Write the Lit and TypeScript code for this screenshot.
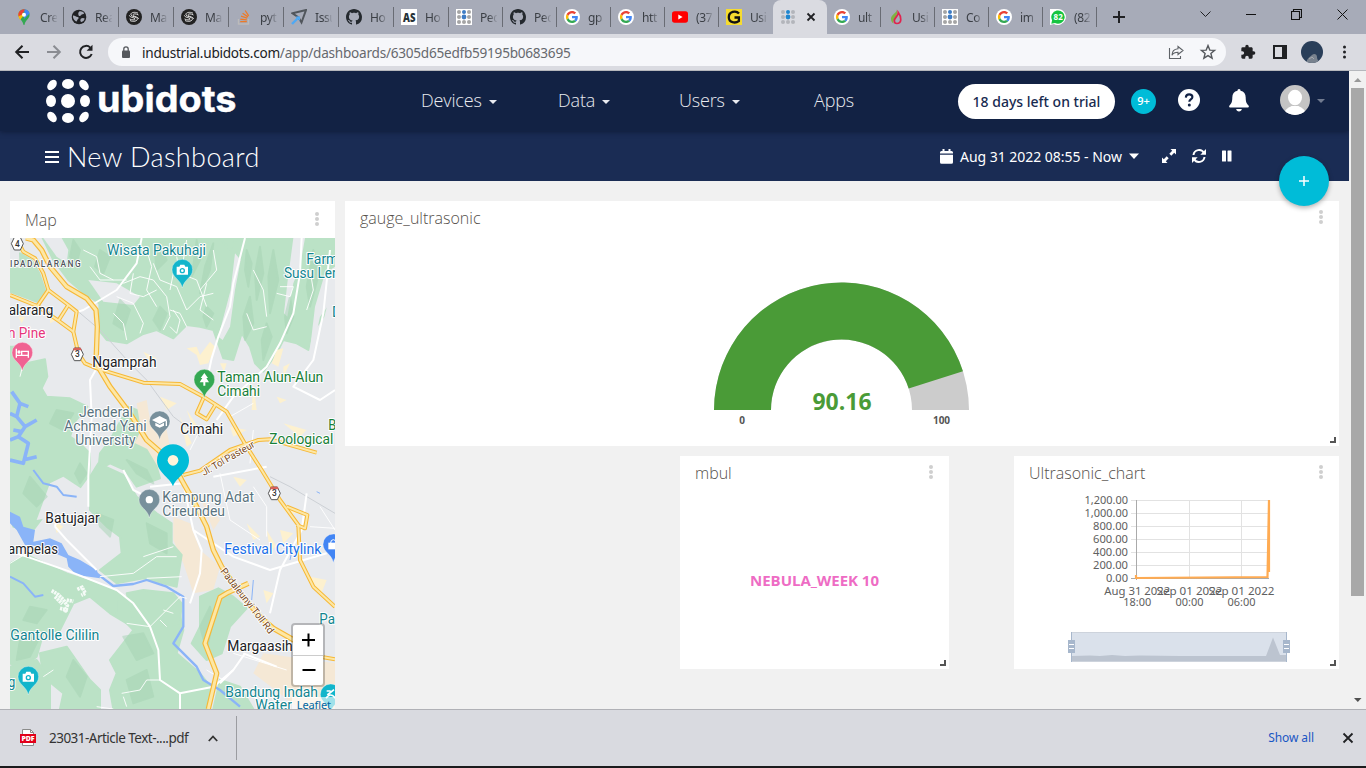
import { LitElement, html, svg, css } from "lit";
import { customElement } from "lit/decorators.js";

const ubi = (on: string, off: string) => svg`
  ${[3, 8, 13].map((x) => [3, 8, 13].map((y) => svg`<circle cx=${x} cy=${y} r=${x === 8 && y === 8 ? 2.4 : 2} fill=${x === 8 && y < 13 ? on : off}/>`))}
  `;
const google = svg`<circle cx="8" cy="8" r="8" fill="#fff"/>
  <g transform="translate(1.9 1.9) scale(.254)">
  <path fill="#EA4335" d="M24 9.5c3.54 0 6.71 1.22 9.21 3.6l6.85-6.85C35.9 2.38 30.47 0 24 0 14.62 0 6.51 5.38 2.56 13.22l7.98 6.19C12.43 13.72 17.74 9.5 24 9.5z"/>
  <path fill="#4285F4" d="M46.98 24.55c0-1.57-.15-3.09-.38-4.55H24v9.02h12.94c-.58 2.96-2.26 5.48-4.78 7.18l7.73 6c4.51-4.18 7.09-10.36 7.09-17.65z"/>
  <path fill="#FBBC05" d="M10.53 28.59c-.48-1.45-.76-2.99-.76-4.59s.27-3.14.76-4.59l-7.98-6.19C.92 16.46 0 20.12 0 24c0 3.88.92 7.54 2.56 10.78l7.97-6.19z"/>
  <path fill="#34A853" d="M24 48c6.48 0 11.93-2.13 15.89-5.81l-7.73-6c-2.15 1.45-4.92 2.3-8.16 2.3-6.26 0-11.57-4.22-13.47-9.91l-7.98 6.19C6.51 42.62 14.62 48 24 48z"/></g>`;
const github = svg`<path fill="#24292e" d="M8 0C3.58 0 0 3.58 0 8c0 3.54 2.29 6.53 5.47 7.59.4.07.55-.17.55-.38 0-.19-.01-.82-.01-1.49-2.01.37-2.53-.49-2.69-.94-.09-.23-.48-.94-.82-1.13-.28-.15-.68-.52-.01-.53.63-.01 1.08.58 1.23.82.72 1.21 1.87.87 2.33.66.07-.52.28-.87.51-1.07-1.78-.2-3.64-.89-3.64-3.95 0-.87.31-1.59.82-2.15-.08-.2-.36-1.02.08-2.12 0 0 .67-.21 2.2.82.64-.18 1.32-.27 2-.27s1.36.09 2 .27c1.53-1.04 2.2-.82 2.2-.82.44 1.1.16 1.92.08 2.12.51.56.82 1.27.82 2.15 0 3.07-1.87 3.75-3.65 3.95.29.25.54.73.54 1.48 0 1.07-.01 1.93-.01 2.2 0 .21.15.46.55.38A8.01 8.01 0 0 0 16 8c0-4.42-3.58-8-8-8z"/>`;
const sIcon = svg`<circle cx="8" cy="8" r="8" fill="#222"/><path d="M12 4.2C8 2.2 4 4 5 6s6 1.6 6.4 3.8S7 13.300 4 11.500M12.500 6C9 4 6 5 7.500 6.600s4.500 1 5.200 3.200M3.300 6.300c.4 2.500 5.300 2 5.700 3.500s-3 1.500-5.500.1" fill="none" stroke="#ddd" stroke-width="1"/>`;
const ubiTab = svg`<rect width="16" height="16" fill="#fff"/>${ubi("#3e7cc4", "#a5a5a5")}`;

const TABS: { icon: any; label: string; active?: boolean }[] = [
  { label: "Cre", icon: svg`<path d="M8 .2a5.600 5.600 0 0 1 5.600 5.600C13.600 9.800 9.300 11.300 8.600 15.400c-.2.7-1 .7-1.200 0C6.700 11.300 2.400 9.800 2.400 5.800A5.600 5.600 0 0 1 8 .2z" fill="#34a853"/><path d="M2.400 5.800A5.600 5.600 0 0 1 4 2l3.800 4-3.600 5C3 9.300 2.400 7.800 2.400 5.800z" fill="#fbbc04"/><path d="M3.600 2.300A5.600 5.600 0 0 1 8 .2L9.500.4 5.500 6 2.600 7.300C2.100 5 2.600 3.500 3.600 2.300z" fill="#ea4335"/><path d="M8.500.2c3 .2 4.600 2.300 5 4.300L8 10z" fill="#4285f4"/><circle cx="8" cy="5.800" r="2" fill="#fff"/>` },
  { label: "Rea", icon: svg`<circle cx="8" cy="8" r="7.300" fill="#202124"/><path d="M2 6.500c2-.2 3 1.500 4.500 1.600s1.500 1.600.4 2.200-.5 2.300-1.600 2.100S1.500 9.500 2 6.500zM8.500 2.300c2-.3 4 .5 4.700 2-.7 1.500-2.500.6-3.200 2S7.500 7 7.400 5.800 7 3.500 8.500 2.300zM10 9.500c1.500-.9 3-.6 3.700.1-.4 2-1.800 3.300-3.200 3.400S9 10.400 10 9.500z" fill="#a7abb8"/>` },
  { label: "Ma", icon: sIcon },
  { label: "Ma", icon: sIcon },
  { label: "pyt", icon: svg`<path d="M2.500 10v5h10v-5" fill="none" stroke="#bcbbbb" stroke-width="1.400"/><path d="M4.200 12.700h6.600M4.300 10.100l6.500.8M5 7.200l6.200 2M6.600 4.300l5.400 3.600M9.200 1.500l3.500 5.300" stroke="#ee7a26" stroke-width="1.300"/>` },
  { label: "Issu", icon: svg`<path d="M1.500 4.300 15 1l-4.500 12.500-3-5z" fill="none" stroke="#51565c" stroke-width="2"/><path d="M1 15l7-7" stroke="#4fa9f5" stroke-width="2.400"/><path d="M4.500 7.500H9V12z" fill="#4fa9f5"/>` },
  { label: "Ho", icon: github },
  { label: "Ho", icon: svg`<rect width="16" height="16" fill="#fff"/><text x="2" y="12.800" font-family="Open Sans" font-weight="800" font-size="12" textLength="12.400" lengthAdjust="spacingAndGlyphs" fill="#263238">AS</text>` },
  { label: "Pec", icon: ubiTab },
  { label: "Pec", icon: github },
  { label: "gp", icon: google },
  { label: "htt", icon: google },
  { label: "(37", icon: svg`<rect y="2.300" width="16" height="11.400" rx="2.600" fill="#f00"/><path d="M6.300 5.500v5l4.300-2.500z" fill="#fff"/>` },
  { label: "Usi", icon: svg`<rect width="16" height="16" fill="#f6dc2f"/><path d="M13 4.600C10 1 2.800 2.500 2.800 8.200S9.500 14.600 12.900 12V8.500H8.500" fill="none" stroke="#111" stroke-width="2.300"/>` },
  { label: "", active: true, icon: ubi("#1f86cf", "#b3b5bb") },
  { label: "ult", icon: google },
  { label: "Usi", icon: svg`<path d="M8.800.3c.6 3.600-6 5.300-5.800 9.700.1 2 1 3.600 2.500 4.400-.7-3 1.300-4.600 2.600-7C9.300 5 9.500 2.500 8.800.3z" fill="#7fb342"/><path d="M10.300 3.500C10.500 7 6.300 8.500 6.300 11.800c0 1.600 1 2.700 2.600 2.700 4.600 0 5.300-6 1.400-11z" fill="none" stroke="#e0234e" stroke-width="1.700"/>` },
  { label: "Co", icon: ubiTab },
  { label: "im", icon: google },
  { label: "(82", icon: svg`<path d="M0 0h8a8 8 0 1 1-4 15L0 16z" fill="#fff"/><path d="M1.300 14.700l.8-3.400A6.700 6.700 0 1 1 5 14.100z" fill="#16c441"/><text x="8.200" y="11" text-anchor="middle" font-family="Open Sans" font-weight="700" font-size="8" fill="#fff">82</text>` },
];

@customElement("browser-chrome")
class BrowserChrome extends LitElement {
  static styles = css`
    :host { display: block; height: 70px; font-family: "Noto Sans", "Open Sans", sans-serif; }
    .strip { height: 34px; background: #a7abb8; display: flex; padding-left: 9px; }
    .tab { width: 54px; height: 34px; display: flex; align-items: center; box-sizing: border-box; padding-left: 7px; position: relative; color: #3b3f45; font-size: 12px; }
    .tab.wide { width: 55px; }
    .tab::after { content: ""; position: absolute; right: 0; top: 7px; width: 1px; height: 20px; background: #696c74; }
    .tab.before::after, .tab.active::after { display: none; }
    .tab.active { background: #dadbe1; border-radius: 8px 8px 0 0; }
    .tab svg { flex: none; }
    .label { margin-left: 8px; width: 17px; overflow: hidden; white-space: nowrap; -webkit-mask-image: linear-gradient(90deg, #000 50%, transparent 105%); mask-image: linear-gradient(90deg, #000 50%, transparent 105%); letter-spacing: -.4px; }
    .x { margin-left: 10px; }
    .plus { margin-left: 16px; align-self: center; }
    .win { margin-left: auto; display: flex; align-items: center; height: 28px; gap: 35px; padding-right: 18px; }
    .bar { height: 36px; background: #dadbe1; display: flex; align-items: center; box-sizing: border-box; padding: 0 0 0 14px; }
    .url { flex: none; margin-left: 14px; width: 1118px; height: 28px; border-radius: 14px; background: #f6f7fa; display: flex; align-items: center; box-sizing: border-box; padding-left: 13px; font-size: 13.600px; color: #66696e; }
    .addr { margin-left: 11px; letter-spacing: -.25px; flex: 1; white-space: nowrap; }
    .addr b { font-weight: 400; color: #202124; }
    .nav { display: flex; gap: 16px; width: 80px; flex: none; }
    .tools { display: flex; align-items: center; margin-left: 14px; flex: none; }
  `;
  render() {
    return html`
      <div class="strip">
        ${TABS.map((t, i) => html`<div class="tab ${i < 8 ? "wide" : ""} ${t.active ? "active" : ""} ${i === 13 ? "before" : ""}">
          <svg width="16" height="16" viewBox="0 0 16 16">${t.icon}</svg>
          ${t.active ? html`<svg class="x" width="10" height="10"><path d="M1.500 1.500l7 7m0-7l-7 7" stroke="#202124" stroke-width="1.800"/></svg>` : html`<span class="label">${t.label}</span>`}
        </div>`)}
        <svg class="plus" width="12" height="12"><path d="M6 0v12M0 6h12" stroke="#202124" stroke-width="2"/></svg>
        <div class="win">
          <svg width="11" height="10"><path d="M.5 2.500l5 5 5-5" fill="none" stroke="#202124"/></svg>
          <svg width="10" height="10"><path d="M0 5.500h10" stroke="#111"/></svg>
          <svg width="11" height="11"><path d="M.5 2.500h8v8h-8zM2.500 2.500v-2h8v8h-2" fill="none" stroke="#111" stroke-width="1.100"/></svg>
          <svg width="11" height="11"><path d="M.5.5l10 10m0-10l-10 10" stroke="#111"/></svg>
        </div>
      </div>
      <div class="bar">
        <div class="nav">
          <svg width="16" height="16"><path d="M15 8H2.500M8.500 1.700L2.200 8l6.300 6.300" fill="none" stroke="#202124" stroke-width="2"/></svg>
          <svg width="16" height="16"><path d="M1 8h12.500M7.500 1.700L13.800 8l-6.300 6.300" fill="none" stroke="#8a8c92" stroke-width="2"/></svg>
          <svg width="16" height="16"><path d="M13.700 10A6 6 0 1 1 12.300 3.600" fill="none" stroke="#202124" stroke-width="2"/><path d="M14.500.8v6H8.600z" fill="#202124"/></svg>
        </div>
        <div class="url">
          <svg width="10" height="12" viewBox="0 0 10 12"><rect x="1" y="4.500" width="8" height="7.500" rx="1" fill="#55585d"/><path d="M2.800 5V3a2.200 2.200 0 0 1 4.400 0v2" fill="none" stroke="#55585d" stroke-width="1.300"/></svg>
          <span class="addr"><b>industrial.ubidots.com</b>/app/dashboards/6305d65edfb59195b0683695</span>
          <svg width="16" height="16" viewBox="0 0 16 16" fill="none" stroke="#5f6368" stroke-width="1.100"><path d="M1.500 4v10.500h11V12"/><path d="M10 2.500l5 4-5 4V8.300C7 8.300 5 9.300 4 11.300 4 7.500 6.500 5 10 4.700z"/></svg>
          <svg width="42" height="16" viewBox="-16 0 42 16"><path d="M8 1.600l1.800 4.500 4.800.3-3.700 3.100 1.200 4.700L8 11.600l-4.100 2.600 1.200-4.700L1.400 6.400l4.800-.3z" fill="none" stroke="#55585d" stroke-width="1.400"/></svg>
        </div>
        <div class="tools">
          <svg width="16" height="16" viewBox="0 0 24 24"><path fill="#202124" d="M20.500 11H19V7c0-1.100-.9-2-2-2h-4V3.500a2.500 2.500 0 0 0-5 0V5H4a2 2 0 0 0-2 2v3.800h1.500a2.700 2.700 0 0 1 0 5.400H2V20c0 1.100.9 2 2 2h3.800v-1.500a2.700 2.700 0 0 1 5.400 0V22H17a2 2 0 0 0 2-2v-4h1.500a2.500 2.500 0 0 0 0-5z"/></svg>
          <svg width="45" height="14" viewBox="-17 0 45 14"><rect x="1" y="1" width="12" height="12" fill="none" stroke="#202124" stroke-width="2"/><path d="M9 0h5v14H9z" fill="#202124"/></svg>
          <svg width="22" height="22"><defs><clipPath id="a"><circle cx="11" cy="11" r="11"/></clipPath></defs><g clip-path="url(#a)"><rect width="22" height="22" fill="#293e59"/><path d="M6 22c-1-4 3-6 5-8s5-1 5 2 2 3 1 6z" fill="#78828e"/><path d="M8 18l3-2 2 2" stroke="#a5a9ae" fill="none"/></g></svg>
          <svg width="43" height="16" viewBox="-19 0 43 16" fill="#202124"><circle cx="2.500" cy="3" r="1.500"/><circle cx="2.500" cy="8" r="1.500"/><circle cx="2.500" cy="13" r="1.500"/></svg>
        </div>
      </div>`;
  }
}

const G = "#bbe2c6";
// Map geometry is expressed at three units per pixel.
const GREENS = [
  "M128 24H710L690 60 660 24H1005V180L985 200 970 260 935 310 925 360 890 340 850 330 830 370 790 425 765 400 750 350 725 310 700 390 670 385 640 300 600 290 560 285 520 325 470 300 430 312 380 340 320 330 300 305 298 220 250 188 205 150 160 90Z",
  "M60 70L95 90 118 130 135 180 110 215 30 185V110L62 118Z",
  "M30 350L60 350 80 400 135 388 142 440 125 475 140 500 210 505 262 530 225 575 210 620 240 640 270 670 268 735 235 780 215 830 170 830 130 860 100 900 40 890 30 860Z",
  "M385 530L410 540 420 600 400 640 440 660 470 710 480 745 410 770 375 720 330 700 295 720 300 670 330 630Z",
  "M295 700L370 735 410 800 470 850 515 880 515 940 545 975 530 1070 430 1045 350 1060 300 1020 365 970 360 920 320 890 270 840 270 740Z",
  "M30 1000L80 975 200 1030 290 1060 340 1080 400 1120 440 1170 380 1180 330 1150 270 1100 220 1120 180 1200 130 1210 110 1280 60 1320 30 1300Z",
  "M350 1110L430 1090 530 1110 550 1200 530 1270 600 1330 640 1380 625 1437H340L330 1380 350 1330 330 1290 400 1200 350 1150Z",
  "M600 1100L655 1075 700 1100 740 1135 690 1190 665 1270 620 1290 575 1240 600 1190Z",
  "M120 1270L200 1250 270 1350 300 1380 300 1437H180L190 1390 130 1340Z",
  "M30 1310L110 1290 150 1350 150 1437H30Z",
  "M660 1350L720 1370 760 1437H640Z",
  "M380 1090L430 1080 520 1090 545 1120 540 1180 450 1200 400 1170Z",
];
const GREYS = [
  "M880 24L915 24 900 110 880 160 862 260 852 250 862 160Z",
  "M705 70L722 90 705 180 690 290 668 330 655 320 692 180Z",
  "M975 130L1005 110V200L960 260 945 330 925 400 945 230Z",
  "M265 150L350 160 420 200 400 225 310 215Z",
  "M150 760L190 740 250 780 220 850 110 870Z",
  "M130 24H185L205 60 200 100 170 80Z",
];
const SHADES = [
  "M220 30L240 60 230 100 210 80Z", "M360 210L390 240 370 300 340 280Z", "M590 30L600 90 575 140 585 70Z", "M640 40L630 120 600 190 615 110Z",
  "M780 50L790 130 770 210 765 130Z", "M820 60L835 150 810 250 805 140Z", "M750 200L760 280 735 330 730 260Z", "M940 60L960 120 930 230 920 170Z",
  "M480 230L500 250 480 300 460 270Z", "M620 230L640 250 620 290 610 260Z", "M380 690L440 720 460 760 410 730Z", "M440 880L500 910 500 970 450 940Z",
  "M370 1220L430 1210 460 1270 410 1290Z", "M380 1350L440 1320 460 1400 400 1420Z", "M220 1290L260 1340 240 1400 200 1340Z", "M600 1190L630 1130 640 1170 620 1260Z",
  "M290 850L340 870 330 920 300 890Z", "M60 1230L120 1220 90 1280 50 1290Z", "M170 540L220 550 190 600 150 580Z",
  "M300 60L330 80 310 130 285 110Z", "M480 40L500 90 470 120 465 70Z", "M800 280L815 320 790 390 785 330Z", "M740 60L755 100 745 170 735 120Z", "M870 200L880 260 860 310 855 260Z",
  "M90 740L140 800 110 830 70 790Z", "M240 700L260 730 240 760 225 730Z", "M90 1130L140 1140 110 1180 70 1170Z",
];
const YELLOW = [
  "M78 24L100 30 125 60 150 110 200 170 260 205 288 240 292 290 288 400 330 470 390 550 440 630 520 700 545 750 590 830 620 890 640 960 665 1010 720 1090 780 1160 820 1195 890 1235",
  "M48 24L70 65 105 85 130 130 145 180 112 228 30 195",
  "M145 180L205 225 230 245 220 305 235 370 255 400 290 415 430 458 540 462 610 500 680 545 740 650 785 720 840 810 895 885 900 990 940 1070 1005 1130",
  "M112 228L175 272 220 305M175 272L205 225", "M610 505L590 550 620 568 648 522", "M550 735L600 722 690 660 775 630 810 628 950 668",
  "M860 830L922 855 915 895 890 885", "M745 1060L685 1087 660 1102 615 1240 650 1330 625 1437", "M970 1282L1005 1288",
];
const WHITE_MAIN = [
  "M425 24L410 100 350 180 250 240 235 245", "M735 24L700 160 690 230 655 320 635 385 610 500", "M905 24L900 130 880 250 840 340 800 410 700 500 650 570",
  "M990 60L970 250 940 390 880 470 960 510 1005 480", "M290 415L270 450 275 560 265 740 265 830", "M165 890L200 930 290 1020M165 890L175 850",
  "M30 965L80 980 210 1025 350 1080 400 1120 450 1190 475 1260 480 1350 540 1390 540 1437M540 1390L640 1370 700 1320 735 1270",
  "M370 720L400 780 440 800 M550 760L580 900 605 960 600 1030 570 1120M580 900L700 980 810 1020 980 970M920 790L905 900 840 1020 810 1150",
  "M730 1270L830 1310M660 1360L700 1320M450 770L550 760M640 740L800 710",
];
const WHITE_MINOR = [
  "M370 160L420 140 460 150 500 200 510 260 490 300 M350 200L400 220 430 280 420 310 M460 100L480 150 530 170 560 240 600 200 640 190 M380 330L370 280 340 250 M530 80L540 130 590 150 620 230 M560 290L540 250 510 240",
  "M400 130L390 190 430 200 470 180 M250 60L290 80 300 130 340 150 M270 110L300 150 380 150 M60 440L70 400 M620 160L600 240 640 270 M830 190L870 200 880 170 840 170",
  "M545 1040L440 1045 M30 1000L80 970 M380 1180L450 1190 540 1100 560 1105 M365 1390L420 1380 440 1350 480 1350 M380 1430L370 1400 M490 1140L520 1150 M480 1170L500 1190",
  "M690 560L760 520 M750 700L760 600 M600 600L570 660 M660 730L690 870 780 930 M760 770L800 830 800 920 M960 830L1005 900 M930 890L1005 895 M700 1270L860 1320 M620 1320L670 1350",
  "M290 1430L340 1437 M130 1340L160 1320 M430 980L520 950 M300 1040L400 1030 470 980 530 980",
  "M440 60L455 110 440 180 470 230 M560 30L550 90 520 130 510 180 M640 60L650 120 600 180 M760 120L790 180 800 260 M520 240L540 270 530 310 510 290 M740 250L760 300 800 290 M930 120L940 180 920 240",
];
const URBAN = [
  "M560 355L590 350 600 375 630 335 645 350 625 400 600 405 590 375ZM830 360L850 355 835 410 815 400ZM430 365L470 385 450 400ZM850 410L870 400 850 440ZM480 500L530 520 500 540ZM760 460L770 540 755 540Z",
  "M560 540L600 600 585 610ZM830 500L860 510 840 520ZM850 580L920 600 900 620ZM740 880L780 920 760 930ZM800 900L830 950 810 960ZM930 1040L980 1050 960 1100ZM790 1080L820 1090 800 1120Z",
  "M160 870L190 890 170 910ZM55 260L75 260 65 280ZM150 245L170 270 150 280ZM840 820L900 850 860 850Z",
  "M660 400L680 400 672 425ZM700 470L740 490 720 500ZM540 560L575 640 560 650ZM690 590L740 600 700 620ZM700 740L740 750 720 770ZM840 900L880 910 850 940Z",
];
const roadName = (x: number, y: number, rot: number, len: number, s: string) =>
  svg`<text class="road" x=${x} y=${y} transform="rotate(${rot} ${x} ${y})" textLength=${len}>${s}</text>`;
const label = (x: number, y: number, len: number, c: string, s: string) =>
  svg`<text class="lb" x=${x} y=${y} textLength=${len} lengthAdjust="spacingAndGlyphs" fill=${c}>${s}</text>`;
const pin = (x: number, y: number, c: string, glyph: any) =>
  svg`<g transform="translate(${x} ${y})"><path d="M0 55C-5 28-31 24-31 0a31 31 0 0 1 62 0C31 24 5 28 0 55z" fill=${c} stroke="#fff" stroke-opacity=".5" stroke-width="2"/>${glyph}</g>`;
const camera = svg`<path d="M-17-9h8l3-6H6l3 6h8v24h-34z" fill="#fff"/><circle cy="3" r="6" fill="none" stroke="#12b5cb" stroke-width="4"/>`;
const shield = (x: number, y: number, n: string) =>
  svg`<g transform="translate(${x} ${y})"><path d="M-9-19H9L18 0 9 19H-9L-18 0z" fill="#fff" stroke="#555" stroke-width="3"/>${n === "3" ? svg`<path d="M-10-20H10L13-12H-13z" fill="#d9605a"/>` : ""}<text text-anchor="middle" y="9" font-size="25" fill="#333" font-weight="500">${n}</text></g>`;

@customElement("map-view")
class MapView extends LitElement {
  static styles = css`
    :host { display: block; position: relative; width: 325px; height: 471px; overflow: hidden; }
    svg { display: block; font-family: Roboto, sans-serif; }
    .lb { font-size: 42px; stroke: #fff; stroke-width: 6px; paint-order: stroke; stroke-linejoin: round; }
    .road { font-size: 30px; fill: #7a4b1c; stroke: #fff; stroke-width: 5px; paint-order: stroke; }
    .zoom { position: absolute; left: 281px; top: 385px; width: 30px; border: 2px solid rgba(0,0,0,.22); border-radius: 4px; background: #fff; background-clip: padding-box; }
    .zoom svg { width: 30px; height: 30px; }
    .zoom svg + svg { border-top: 1px solid #ccc; height: 29px; }
    .attr { position: absolute; right: 0; bottom: -4px; height: 16px; padding: 0 4px 0 5px; background: rgba(255,255,255,.6); font: 11px/16px "Noto Sans", sans-serif; letter-spacing: -.1px; color: #0067a0; }
  `;
  render() {
    return html`<svg width="325" height="471" viewBox="30 24 975 1413">
      <rect x="30" y="24" width="975" height="1413" fill="#e8eaed"/>
      <path d="M410 520L440 510 450 570 500 600 520 700 470 720 400 640 420 600ZM520 860L570 880 600 960 660 1010 640 1080 580 1090 550 1000 520 930ZM600 800L660 870 640 900ZM790 1270L1005 1300V1437H900L760 1330Z" fill="#f5e8d5"/>
      ${GREENS.map((d) => svg`<path d=${d} fill=${G} stroke=${G} stroke-width="6" stroke-linejoin="round"/>`)}
      ${GREYS.map((d) => svg`<path d=${d} fill="#e8eaed"/>`)}
      ${SHADES.map((d) => svg`<path d=${d} fill="#a6d3b4" opacity=".5" stroke="#a6d3b4" stroke-width="6" stroke-linejoin="round"/>`)}
      ${URBAN.map((d) => svg`<path d=${d} fill="#fdf1cf"/>`)}
      <g fill="none" stroke="#8ab4f8" stroke-linejoin="round">
        <path d="M35 485L60 520 50 560 75 590 55 620 85 640 70 700 30 690M50 560L30 550M75 590L110 570M55 620L30 630M70 690L110 680M60 520L85 530M40 600L65 605" stroke-width="11"/>
        <path d="M100 720L130 760 170 770 190 795 230 800M30 1040L70 1060 105 1100 130 1095" stroke-width="6"/>
        <path d="M290 1030L340 1068 400 1062 440 1050 500 1070 550 1100 550 1190 520 1240 590 1310 610 1350 660 1380 720 1430" stroke-width="7"/>
        <path d="M760 1050L755 1110M880 940L870 990M950 785L960 790" stroke-width="3"/>
      </g>
      <path d="M30 845L60 860 70 890 105 900 100 935 150 925 185 940 205 975 240 990 290 1020 300 1045 230 1035 205 1010 200 985 165 970 140 950 75 945 50 900 30 880Z" fill="#8ab4f8"/>
      <path d="M235 245L300 300 390 400 440 450 520 560 600 620 M810 740L870 770 1005 850" fill="none" stroke="#ccd0d5" stroke-width="3"/>
      ${WHITE_MINOR.map((d) => svg`<path d=${d} fill="none" stroke="#fff" stroke-width="3" opacity=".9"/>`)}
      ${WHITE_MAIN.map((d) => svg`<path d=${d} fill="none" stroke="#fff" stroke-width="6" stroke-linejoin="round"/>`)}
      <path d="M155 1082l20 12 15 15 12 18-8 20M165 1100l22 22M200 1110l20 4M232 1078l14-6 10 18-12 6M180 1135l24 6" fill="none" stroke="#fff" stroke-width="11" stroke-dasharray="7 2" opacity=".85"/>
      ${YELLOW.map((d, i) => svg`<path d=${d} fill="none" stroke="#f6b836" stroke-width=${i === 0 || i === 7 ? 16 : 12} stroke-linejoin="round"/>`)}
      ${YELLOW.map((d, i) => svg`<path d=${d} fill="none" stroke="#fde7a5" stroke-width=${i === 0 || i === 7 ? 9 : 6} stroke-linejoin="round"/>`)}
      ${shield(52, 41, "4")}${shield(232, 373, "3")}${shield(823, 790, "3")}
      ${roadName(612, 738, -30, 178, "Jl. Tol Pasteur")}
      ${roadName(660, 1024, 52, 240, "Padaleunyi Toll Rd")}
      <text x="30" y="111" font-size="25" font-weight="500" textLength="212" fill="#50555b" stroke="#fff" stroke-width="5" paint-order="stroke">IPADALARANG</text>
      ${label(321, 75, 297, "#12858f", "Wisata Pakuhaji")}
      ${label(919, 102, 96, "#12858f", "Farm")}${label(852, 144, 158, "#12858f", "Susu Ler")}
      ${label(996, 262, 28, "#12858f", "D")}
      ${label(26, 256, 134, "#202124", "alarang")}${label(24, 324, 112, "#e6347b", "n Pine")}
      ${label(277, 411, 193, "#202124", "Ngamprah")}
      ${label(652, 456, 318, "#188038", "Taman Alun-Alun")}${label(652, 498, 128, "#188038", "Cimahi")}
      ${label(237, 561, 162, "#5a7480", "Jenderal")}${label(192, 603, 248, "#5a7480", "Achmad Yani")}${label(226, 645, 181, "#5a7480", "University")}
      ${label(541, 612, 128, "#202124", "Cimahi")}
      ${label(985, 600, 24, "#188038", "B")}${label(808, 642, 192, "#188038", "Zoological")}
      ${label(487, 816, 275, "#5a7480", "Kampung Adat")}${label(487, 858, 188, "#5a7480", "Cireundeu")}
      ${label(136, 879, 163, "#202124", "Batujajar")}${label(24, 972, 150, "#202124", "ampelas")}
      ${label(673, 971, 291, "#1a6fe8", "Festival Citylink")}
      ${label(958, 1182, 47, "#12858f", "Pa")}
      ${label(31, 1229, 267, "#12858f", "Gantolle Cililin")}${label(24, 1370, 22, "#12858f", "g")}
      ${label(682, 1263, 196, "#202124", "Margaasih")}
      ${label(676, 1401, 278, "#12858f", "Bandung Indah")}${label(766, 1441, 110, "#12858f", "Water")}
      ${pin(547, 119, "#12b5cb", camera)}
      ${pin(67, 368, "#f06292", svg`<path d="M-18-12v27M-18 8H18V15M18 8V-4H-2V8" stroke="#fff" stroke-width="4" fill="none"/><circle cx="-10" cy="-2" r="5" fill="#fff"/>`)}
      ${pin(613, 449, "#34a853", svg`<path d="M0-20L-11-5h5L-14 8H-3V18H3V8H14L6-5h5z" fill="#fff"/>`)}
      ${pin(479, 574, "#78909c", svg`<path d="M0-16L-23-4 0 8 23-4zM-13 4V13L0 19 13 13V4L0 11zM18-2h4V14H18z" fill="#fff"/>`)}
      ${pin(448, 809, "#78909c", svg`<circle r="11" fill="#fff"/>`)}
      ${pin(1000, 943, "#4285f4", svg`<path d="M-15-5H15V15H-15z" fill="#fff"/><path d="M-8-4a8 10 0 0 1 16 0" fill="none" stroke="#fff" stroke-width="3"/>`)}
      ${pin(85, 1340, "#12b5cb", camera)}
      ${pin(992, 1393, "#12b5cb", svg`<path d="M-14 12Q0-8 14 12M-10 2L10-14M-12-10H0" stroke="#fff" stroke-width="5" fill="none"/>`)}
      <path d="M519 769C508 740 471 728 471 691a48 48 0 0 1 96 0C567 728 530 740 519 769z" fill="#00bcd8"/><circle cx="519" cy="691" r="16" fill="#fff4da"/>
    </svg>
    <div class="zoom"><svg><path d="M9 15h13M15.500 8.500v13" stroke="#000" stroke-width="2"/></svg><svg><path d="M9.500 14h13" stroke="#000" stroke-width="2"/></svg></div>
    <div class="attr">Leaflet</div>`;
  }
}

const caret = html`<svg width="8" height="4"><path d="M0 0h8L4 4z" fill="currentColor"/></svg>`;

@customElement("dash-widget")
class DashWidget extends LitElement {
  static properties = { name: {}, corner: { type: Boolean } };
  declare name: string;
  declare corner: boolean;
  static styles = css`
    :host { display: block; background: #fff; position: relative; overflow: hidden; font-family: "Open Sans", sans-serif; }
    .head { height: 37px; display: flex; justify-content: space-between; padding: 0 15px; box-sizing: border-box; color: #55504b; font-weight: 300; font-size: 16px; line-height: 35px; }
    .head svg { margin-top: 8px; }
    .corner { position: absolute; right: 3px; bottom: 3px; }
    :host([low]) .head { line-height: 38px; }
    :host([low]) .head svg { margin-top: 10px; }
  `;
  render() {
    return html`<div class="head"><span>${this.name}</span><svg width="6" height="16" fill="#cfcfcf"><circle cx="3" cy="3" r="2"/><circle cx="3" cy="8" r="2"/><circle cx="3" cy="13" r="2"/></svg></div><slot></slot>
    ${this.corner ? html`<svg class="corner" width="6" height="6"><path d="M5 0v5H0" fill="none" stroke="#555" stroke-width="2"/></svg>` : ""}`;
  }
}

@customElement("app-root")
class AppRoot extends LitElement {
  static styles = css`
    :host { display: flex; flex-direction: column; width: 1366px; height: 768px; overflow: hidden; font-family: "Open Sans", sans-serif; }
    .view { height: 639px; flex: none; display: flex; border-top: 1px solid #b5b7bc; box-sizing: border-box; background: #f1f1f1; }
    .page { width: 1349px; height: 638px; overflow: hidden; position: relative; }
    .scroll { width: 13px; margin-left: 2px; display: flex; flex-direction: column; align-items: center; }
    .scroll svg { flex: none; height: 17px; }
    .thumb { width: 13px; height: 508px; background: #a8a8a8; margin-bottom: 96px; flex: none; }
    .top { height: 60px; background: #122244; display: flex; align-items: center; padding-left: 45px; color: #e9ebf0; position: relative; box-shadow: 0 1px 5px rgba(8,15,35,.55); }
    .item { font-size: 18px; display: flex; align-items: center; gap: 7px; height: 58px; margin-top: -2px; white-space: nowrap; letter-spacing: -.15px; font-weight: 350; }
    .item svg { margin-top: 4px; }
    .devices { width: 137px; } .data { width: 121px; } .users { width: 135px; } .apps { width: 144px; }
    .pill { width: 157px; height: 35px; border-radius: 18px; background: #fff; color: #172a50; font-size: 14px; font-weight: 500; display: flex; align-items: center; justify-content: center; font-family: "Noto Sans", sans-serif; white-space: nowrap; }
    .badge { width: 25px; height: 25px; border-radius: 50%; background: #00bcd8; color: #fff; font-size: 11px; font-weight: 600; line-height: 24px; text-align: center; margin: 0 22px 0 16px; }
    .help { margin-right: 29px; } .bell { margin-right: 31px; } .avatar { margin-right: 7px; }
    .top > svg { flex: none; position: relative; top: -1px; }
    .top > .logo { width: 376px; height: 60px; top: 0; }
    .dim { color: #717b90; display: flex; }
    .sub { height: 50px; background: #1a2c54; display: flex; align-items: center; padding-left: 45px; color: #fff; }
    .title { font: 300 27px Lato, sans-serif; margin-left: 8px; width: 873px; letter-spacing: .4px; white-space: nowrap; }
    .date { margin-left: 7px; font-size: 14px; width: 169px; white-space: nowrap; font-weight: 450; letter-spacing: -.03px; font-family: "Noto Sans", sans-serif; }
    .sub > svg { flex: none; }
    .fab { position: absolute; z-index: 2; left: 1279px; top: 85px; width: 50px; height: 50px; border-radius: 50%; background: #00bcd8; box-shadow: 0 2px 5px rgba(0,0,0,.3); display: grid; place-items: center; }
    .grid { display: grid; grid-template-columns: 325px 325px 269px 45px 325px; grid-template-rows: 245px 213px 30px; gap: 10px; padding: 20px 10px 0; }
    .w-map { grid-row: 1 / 4; grid-column: 1; } .w-gauge { grid-column: 2 / 6; } .w-text { grid-column: 3; grid-row: 2; } .w-chart { grid-column: 5; grid-row: 2; }
    .gauge { display: block; margin-top: 30px; }
    .chart { display: block; }
    .note { text-align: center; color: #ee6cc4; font-weight: 700; font-size: 15px; letter-spacing: -.03px; line-height: 20px; padding-top: 77px; }
    .downloads { height: 57px; flex: none; box-sizing: border-box; border-top: 1px solid #b0b1b6; background: #d9dae0; display: flex; align-items: center; padding: 0 12px 0 20px; font: 14px "Noto Sans", sans-serif; color: #333; }
    .file { margin-left: 13px; width: 159px; font-size: 13.500px; letter-spacing: -.52px; white-space: nowrap; }
    .rule { width: 1px; height: 44px; background: #9b9ca1; margin-left: 18px; }
    .all { margin-left: auto; color: #1a56c4; font-size: 12px; letter-spacing: -.1px; margin-right: 28px; padding-bottom: 2px; }
    .edge { height: 2px; background: #1b1b1d; flex: none; }
  `;
  dots() {
    const d: [number, number, number, number, number][] = [
      [7, 6, 4, 5.800, 40], [23, 5, 6, 5, 0], [39, 6, 4, 5.800, -40],
      [6, 22, 5, 6, 0], [23, 22, 7, 7, 0], [40, 22, 5, 6, 0],
      [7, 38, 4, 5.800, -40], [23, 39, 6, 5, 0], [39, 38, 4, 5.800, 40]];
    return d.map(([x, y, rx, ry, r]) => svg`<ellipse cx=${x} cy=${y + 8} rx=${rx} ry=${ry} transform="rotate(${r} ${x} ${y + 8})"/>`);
  }
  render() {
    const end = (r: number) => { const a = Math.PI * (1 - 0.9016); return `${127 + r * Math.cos(a)} ${128 - r * Math.sin(a)}`; };
    const ys = ["1,200.00", "1,000.00", "800.00", "600.00", "400.00", "200.00", "0.00"];
    const yw = [43.500, 43.500, 35, 35, 35, 35, 22];
    return html`
      <browser-chrome></browser-chrome>
      <div class="view">
        <div class="page">
          <div class="top">
            <svg class="logo" viewBox="0 0 376 60" fill="#fff">${this.dots()}
              <text x="52" y="41" font-family="Inter, sans-serif" font-weight="700" font-size="37" textLength="139.500" lengthAdjust="spacingAndGlyphs" stroke="#fff" stroke-width=".4">ubidots</text></svg>
            <div class="item devices">Devices ${caret}</div>
            <div class="item data">Data ${caret}</div>
            <div class="item users">Users ${caret}</div>
            <div class="item apps">Apps</div>
            <div class="pill">18 days left on trial</div>
            <div class="badge">9+</div>
            <svg class="help" width="22" height="22"><circle cx="11" cy="11" r="11" fill="#fff"/><path d="M7.800 8.600C8 6.300 9.400 5.400 11.100 5.400c2 0 3.300 1.100 3.300 2.700 0 2.300-3.100 2.400-3.100 4.600" fill="none" stroke="#122244" stroke-width="2.100"/><circle cx="11.300" cy="16" r="1.500" fill="#122244"/></svg>
            <svg class="bell" width="20" height="23" viewBox="0 0 20 23" fill="#fff"><path d="M10 0c1 0 1.500.7 1.500 1.800 3.500.7 5.200 3.300 5.200 6.700 0 4.500.9 6 2.800 8 .8 1 .2 2-1 2h-17c-1.200 0-1.800-1-1-2 1.900-2 2.800-3.500 2.800-8 0-3.400 1.700-6 5.200-6.700C8.500.7 9 0 10 0zM7.200 20h5.600c0 3.300-5.600 3.300-5.600 0z"/></svg>
            <svg class="avatar" width="30" height="30"><defs><clipPath id="av"><circle cx="15" cy="15" r="15"/></clipPath></defs><g clip-path="url(#av)"><rect width="30" height="30" fill="#c4c4c4"/><ellipse cx="15" cy="12.500" rx="7" ry="7.800" fill="#fff"/><path d="M4 31c0-8 6-8.500 7.500-10h7c1.500 1.500 7.500 2 7.500 10z" fill="#fff"/></g></svg>
            <span class="dim">${caret}</span>
          </div>
          <div class="sub">
            <svg width="14" height="14"><path d="M0 3h14M0 8h14M0 13h14" stroke="#fff" stroke-width="2"/></svg>
            <span class="title">New Dashboard</span>
            <svg width="13" height="15" fill="#fff"><path d="M0 4.500V3.500A1.500 1.500 0 0 1 1.500 2H2.500V0h2v2h4V0h2v2h1A1.500 1.500 0 0 1 13 3.500v1zM0 5.800h13v7.400a1.500 1.500 0 0 1-1.500 1.500h-10A1.500 1.500 0 0 1 0 13.200z"/></svg>
            <span class="date">Aug 31 2022 08:55 - Now</span>
            <svg width="33" height="6"><path d="M0 .5h10L5 6z" fill="#fff"/></svg>
            <svg width="30" height="14" fill="#fff"><path d="M8.500 0H14v5.500L12.200 3.800 9.300 6.700 7.300 4.700 10.200 1.800zM5.500 14H0V8.500l1.800 1.700 2.900-2.900 2 2-2.900 2.900z"/></svg>
            <svg width="30" height="14" fill="none" stroke="#fff" stroke-width="2"><path d="M1.500 6A5.600 5.600 0 0 1 12 4M12.500 8A5.600 5.600 0 0 1 2 10"/><path d="M14 0v5.700H8.300zM0 14V8.300h5.700z" fill="#fff" stroke="none"/></svg>
            <svg width="10" height="12" fill="#fff"><rect width="4" height="11" y=".5" rx=".5"/><rect x="5.500" y=".5" width="4" height="11" rx=".5"/></svg>
          </div>
          <div class="fab"><svg width="10" height="10"><path d="M5 0v10M0 5h10" stroke="#fff" stroke-width="1.500"/></svg></div>
          <div class="grid">
            <dash-widget class="w-map" low name="Map"><map-view></map-view></dash-widget>
            <dash-widget class="w-gauge" corner name="gauge_ultrasonic">
              <svg class="gauge" width="994" height="175" viewBox="-369.5 -14 994 175">
                <path d="M-.5 128A127.500 127.500 0 0 1 254.500 128H197.500A70.500 70.500 0 0 0 56.500 128z" fill="#ccc"/>
                <path d="M-.5 128A127.500 127.500 0 0 1 ${end(127.500)}L${end(70.500)}A70.500 70.500 0 0 0 56.500 128z" fill="#4a9b37"/>
                <text x="127.500" y="128" text-anchor="middle" font-size="24" font-weight="700" fill="#4a9b37" textLength="59" lengthAdjust="spacingAndGlyphs">90.16</text>
                <text x="27.500" y="142" text-anchor="middle" font-size="10" font-weight="700" fill="#555">0</text>
                <text x="227" y="142" text-anchor="middle" font-size="10" font-weight="700" fill="#555">100</text>
              </svg>
            </dash-widget>
            <dash-widget class="w-text" corner name="mbul"><div class="note">NEBULA_WEEK 10</div></dash-widget>
            <dash-widget class="w-chart" corner name="Ultrasonic_chart">
              <svg class="chart" width="325" height="176" viewBox="1014 493 325 176" font-family="Noto Sans, sans-serif" font-size="12" fill="#606060">
                ${ys.map((t, i) => svg`<path d="M1131 ${500.500 + i * 13}H1269" stroke=${i === 6 ? "#aaa" : "#e2e2e2"}/><text x="1128" y=${503.500 + i * 13} font-size="11.500" text-anchor="end" textLength=${yw[i]} lengthAdjust="spacingAndGlyphs">${t}</text>`)}
                <path d="M1189.500 500V578M1241.500 500V578" stroke="#e2e2e2"/><path d="M1136.500 500V580" stroke="#aaa"/>
                <path d="M1136 575V578L1267.500 577 1269 500V572" fill="none" stroke="#ffab52" stroke-width="2.200"/>
                ${[["Aug 31 2022", "18:00", 1137.300], ["Sep 01 2022", "00:00", 1189.500], ["Sep 01 2022", "06:00", 1241.500]].map(([a, b, x]) => svg`<text x=${x} y="595" font-size="11.500" text-anchor="middle" textLength="66" lengthAdjust="spacingAndGlyphs">${a}</text><text x=${x} y="606" font-size="11.500" text-anchor="middle" textLength="28" lengthAdjust="spacingAndGlyphs">${b}</text>`)}
                <rect x="1071.500" y="632.500" width="215" height="29" fill="#dae1eb" stroke="#cdd3dc"/>
                <path d="M1072 661V656L1090 655.500 1100 656 1112 655 1125 656 1140 655.500 1180 656H1266L1273 637.500 1280 655H1287V661z" fill="#bcc4d0"/>
                <path d="M1071.500 632V662M1286.500 632V662" stroke="#a7b7cc"/>
                <path d="M1068 640h7v13h-7zM1283 640h7v13h-7z" fill="#a7b7cc"/><path d="M1069 644.500h5M1069 648.500h5M1284 644.500h5M1284 648.500h5" stroke="#fff"/>
              </svg>
            </dash-widget>
          </div>
        </div>
        <div class="scroll">
          <svg width="8" height="17"><path d="M0 11l3.800-4 3.700 4z" fill="#999"/></svg>
          <div class="thumb"></div>
          <svg width="8" height="17"><path d="M0 6l3.800 4 3.700-4z" fill="#505050"/></svg>
        </div>
      </div>
      <div class="downloads">
        <svg width="16" height="18" viewBox="0 0 16 18"><path d="M2.500.5h8l3 3v13h-11z" fill="#fff" stroke="#8b8b8b"/><path d="M10.500.5v3h3" fill="none" stroke="#8b8b8b"/><rect y="5" width="16" height="9" fill="#e2001a"/><text x="8" y="12.200" text-anchor="middle" font-family="Open Sans" font-size="7" font-weight="800" fill="#fff" textLength="13">PDF</text></svg>
        <span class="file">23031-Article Text-....pdf</span>
        <svg width="10" height="7"><path d="M.8 6L5 1.500 9.200 6" fill="none" stroke="#333" stroke-width="1.800"/></svg>
        <div class="rule"></div>
        <span class="all">Show all</span>
        <svg width="12" height="12"><path d="M1.500 1.500l9 9m0-9l-9 9" stroke="#202124" stroke-width="1.800"/></svg>
      </div>
      <div class="edge"></div>`;
  }
}
